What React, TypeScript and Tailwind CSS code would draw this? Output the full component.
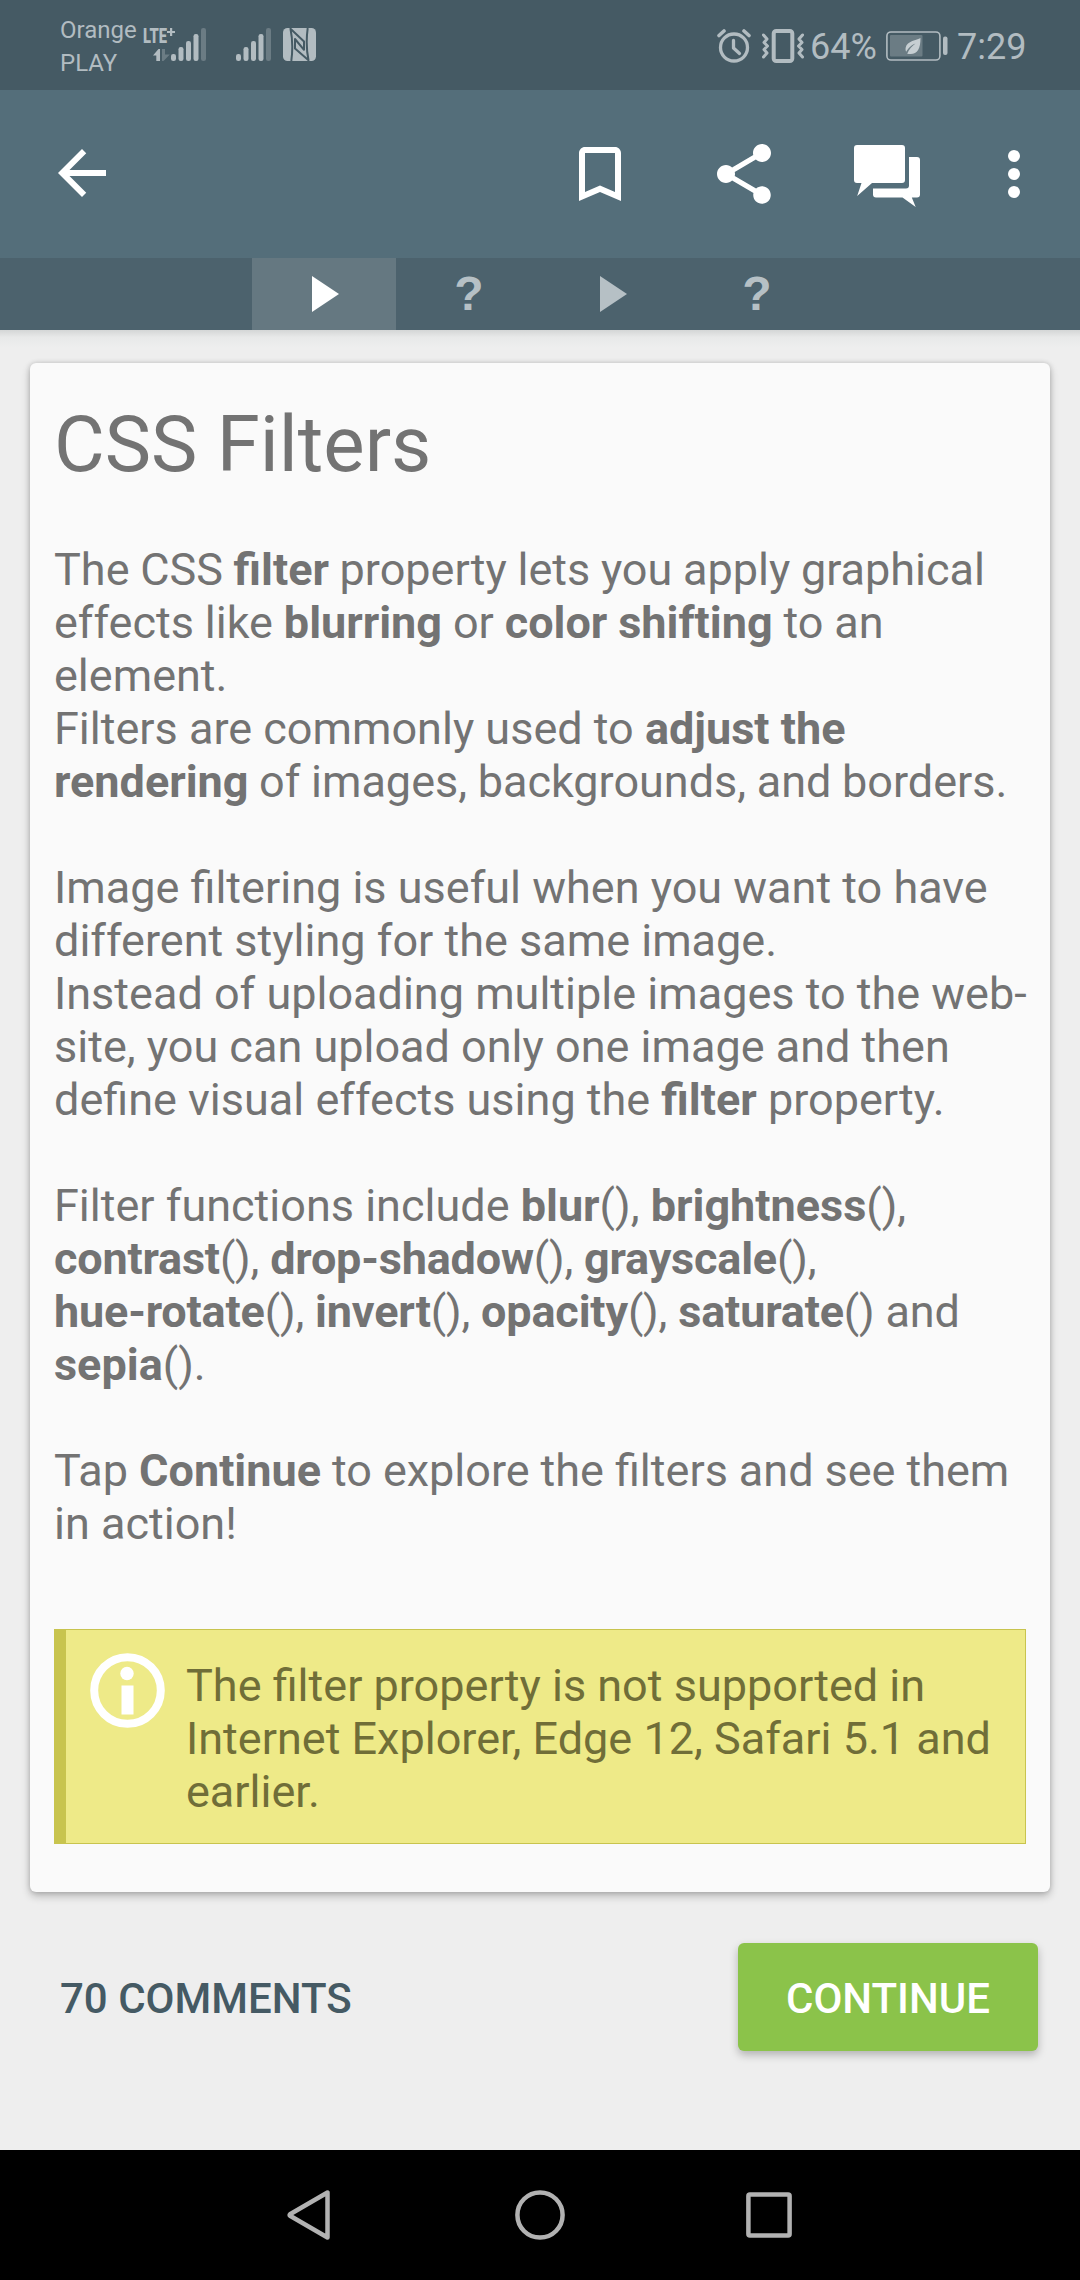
import React from "react";

const SignalBars = () => (
  <svg width="35" height="33" viewBox="0 0 35 33" fill="#b2bcc1" className="shrink-0">
    <rect x="0" y="26" width="5" height="7" rx="2.2" />
    <rect x="7.5" y="19" width="5" height="14" rx="2.2" />
    <rect x="15" y="13" width="5" height="20" rx="2.2" />
    <rect x="22.5" y="6" width="5" height="27" rx="2.2" />
    <rect x="30" y="0" width="5" height="33" rx="2.2" fill="#6b7c84" />
  </svg>
);

const NetworkType = () => (
  <div className="flex h-[33px] w-[28px] shrink-0 flex-col justify-between">
    <div className="flex h-[15px] items-start">
      <span className="w-[24px] origin-left scale-x-[0.7] pt-[1px] text-[21px] leading-[15px] font-black whitespace-nowrap">
        LTE
      </span>
      <svg width="8" height="8" viewBox="0 0 8 8" className="-mr-3 shrink-0" fill="#b2bcc1">
        <path d="M3 0h2.200v2.900H8v2.200H5.200V8H3V5.100H0V2.900h3z" />
      </svg>
    </div>
    <svg width="17" height="12" viewBox="0 0 17 12" className="ml-[10px] shrink-0">
      <path d="M0 6.500 5.500 0H7v12H3.300V6.500z" fill="#b2bcc1" />
      <path d="M9 0h3v5.500h4.800L10.500 12H9z" fill="#6b7c84" />
    </svg>
  </div>
);

const NfcIcon = () => (
  <svg width="33" height="33" viewBox="0 0 33 33" className="shrink-0">
    <rect width="33" height="33" rx="4.500" fill="#b2bcc1" />
    <path
      d="M8.300 33Q10.600 16 7.500 0.800L21 13.500V21.800L12 11V20.500L25.500 32.200Q22.400 17 24.700 0"
      fill="none"
      stroke="#455a64"
      strokeWidth="2"
      strokeLinejoin="round"
    />
  </svg>
);

const AlarmIcon = () => (
  <svg width="34" height="34" viewBox="0 0 34 34" fill="none" stroke="#b2bcc1" className="shrink-0">
    <circle cx="17" cy="18.500" r="13.500" strokeWidth="3.300" />
    <path d="M16.500 11.500v7.500l6 5.500" strokeWidth="3.300" strokeLinecap="round" strokeLinejoin="round" />
    <path d="M2 6.500 7 2M32 6.500 27 2" strokeWidth="3.600" strokeLinecap="round" />
  </svg>
);

const VibrateIcon = () => (
  <svg width="42" height="34" viewBox="0 0 42 34" fill="none" stroke="#b2bcc1" className="shrink-0">
    <rect x="11.700" y="2" width="18.600" height="30" rx="2.500" strokeWidth="4" />
    <path
      d="M1.500 6l3.500 4-3 3.500 3.500 3.500-3.500 3.500 3 3.500-3.500 4M40.500 6l-3.500 4 3 3.500-3.500 3.500 3.500 3.500-3 3.500 3.500 4"
      strokeWidth="3"
      strokeLinecap="round"
      strokeLinejoin="round"
    />
  </svg>
);

const BatteryIcon = () => (
  <svg width="62" height="30" viewBox="0 0 62 30" className="shrink-0">
    <rect x="0.900" y="1" width="53" height="28" rx="4" fill="none" stroke="#b2bcc1" strokeWidth="1.600" />
    <rect x="4" y="4" width="32.500" height="21.500" rx="1" fill="#6b7c84" />
    <rect x="57" y="5.500" width="4.500" height="18.500" rx="2" fill="#b2bcc1" />
    <path
      d="M34.500 7c-3.500 2-13.500 3-14.800 9.500-.4 2 0 3.300.5 4.200 3-5 6.300-7 9.300-8.200-3.300 2.600-6.500 5.500-8.300 10.200 9.300 2 13.300-3.700 13.300-15.700z"
      fill="#c6ced2"
    />
  </svg>
);

const StatusBar = () => (
  <header className="flex h-[90px] items-start bg-[#455a64] text-[#b2bcc1]">
    <div className="ml-[60px] w-[83px] shrink-0 pt-[14px] text-[24px] leading-[33px]">
      <div>Orange</div>
      <div>PLAY</div>
    </div>
    <div className="flex pt-[28px]">
      <NetworkType />
      <SignalBars />
      <div className="ml-[30px] flex gap-[12px]">
        <SignalBars />
        <NfcIcon />
      </div>
    </div>
    <div className="ml-auto flex items-center pt-[28px] pr-[53px]">
      <AlarmIcon />
      <div className="ml-[11px] flex">
        <VibrateIcon />
      </div>
      <span className="ml-[6px] w-[76px] pt-[2px] text-[36px] leading-[34px]">64%</span>
      <BatteryIcon />
      <span className="ml-[9px] w-[70px] pt-[2px] text-[36px] leading-[34px]">7:29</span>
    </div>
  </header>
);

const AppBar = () => (
  <nav className="flex h-[168px] items-center bg-[#546e7a] text-white">
    <svg viewBox="0 0 24 24" fill="currentColor" className="mb-[2px] ml-[46px] size-[72px]">
      <path d="M20 11H7.830l5.590-5.590L12 4l-8 8 8 8 1.410-1.410L7.830 13H20v-2z" />
    </svg>
    <div className="ml-auto flex items-center">
      <svg viewBox="0 0 24 24" fill="currentColor" className="size-[72px]">
        <path d="M17 3H7c-1.100 0-2 .9-2 2v16l7-3 7 3V5c0-1.100-.9-2-2-2zm0 15-5-2.180L7 18V5h10v13z" />
      </svg>
      <svg viewBox="0 0 24 24" fill="currentColor" className="ml-[72px] size-[72px]">
        <path d="M18 16.080c-.76 0-1.440.3-1.960.77L8.910 12.700c.05-.23.09-.46.09-.7s-.04-.47-.09-.7l7.050-4.110c.54.5 1.250.81 2.040.81 1.660 0 3-1.340 3-3s-1.340-3-3-3-3 1.340-3 3c0 .24.04.47.09.7L8.040 9.810C7.500 9.310 6.790 9 6 9c-1.660 0-3 1.340-3 3s1.340 3 3 3c.79 0 1.500-.31 2.040-.81l7.120 4.160c-.05.21-.08.43-.08.65 0 1.610 1.310 2.920 2.920 2.920s2.920-1.310 2.920-2.920-1.310-2.920-2.920-2.920z" />
      </svg>
      <svg width="66" height="62" viewBox="0 0 66 62" fill="currentColor" className="mt-[3px] ml-[74px]">
        <path d="M3 0h45a3 3 0 0 1 3 3v32a3 3 0 0 1-3 3H18L3.200 51 7.500 38H3a3 3 0 0 1-3-3V3a3 3 0 0 1 3-3z" />
        <path d="M55 12h8a3 3 0 0 1 3 3v34.500a3 3 0 0 1-3 3h-5.200L61.700 62 48.500 52.500H22a3 3 0 0 1-3-3V43.500h33a3 3 0 0 0 3-3z" />
      </svg>
      <svg viewBox="0 0 24 24" fill="currentColor" className="mr-[30px] ml-[58px] size-[72px]">
        <circle cx="12" cy="6" r="2" />
        <circle cx="12" cy="12" r="2" />
        <circle cx="12" cy="18" r="2" />
      </svg>
    </div>
  </nav>
);

const Play = () => (
  <svg width="27" height="36" viewBox="0 0 27 36" fill="currentColor" className="ml-[3px]">
    <path d="M0 0 27 18 0 36z" />
  </svg>
);

const Question = () => (
  <span className="ml-[2px] font-['Liberation_Sans',sans-serif] text-[48px] leading-[72px] font-bold">?</span>
);

const LessonTabs = () => (
  <div className="flex h-[72px] justify-center bg-[#4c626d] text-[#b6c0c5]">
    <div className="flex w-[144px] items-center justify-center bg-[#657881] text-white">
      <Play />
    </div>
    <div className="flex w-[144px] items-center justify-center">
      <Question />
    </div>
    <div className="flex w-[144px] items-center justify-center">
      <Play />
    </div>
    <div className="flex w-[144px] items-center justify-center">
      <Question />
    </div>
  </div>
);

const Note = () => (
  <aside className="mt-[79px] flex h-[215px] border border-l-[12px] border-[#c8c44e] bg-[#eeea88] text-[#706e38]">
    <svg width="75" height="75" viewBox="0 0 75 75" className="mt-[23px] ml-[24px] shrink-0">
      <circle cx="37.500" cy="37.500" r="33.300" fill="none" stroke="#fff" strokeWidth="8" />
      <circle cx="37" cy="20.500" r="6.700" fill="#fff" />
      <rect x="31.500" y="32.500" width="12" height="29" fill="#fff" />
    </svg>
    <p className="mt-[29px] ml-[21px] whitespace-nowrap">
      The filter property is not supported in
      <br />
      Internet Explorer, Edge 12, Safari 5.1 and
      <br />
      earlier.
    </p>
  </aside>
);

const LessonCard = () => (
  <main className="mx-[30px] mt-[15px] h-[1529px] rounded-[6px] bg-[#fafafa] px-[24px] text-[45px] leading-[53px] text-[#737373] shadow-[0_4px_8px_rgba(0,0,0,0.24),0_0_5px_rgba(0,0,0,0.16)]">
    <h1 className="pt-[35px] text-[78px] leading-[93px]">CSS Filters</h1>
    <div className="mt-[52px] flex flex-col gap-[53px] whitespace-nowrap">
      <p>
        <span className="[word-spacing:-0.5px]">
          The CSS <b>filter</b> property lets you apply graphical
        </span>
        <br />
        <span className="[word-spacing:-0.3px]">
          effects like <b>blurring</b> or <b>color shifting</b> to an
        </span>
        <br />
        element.
        <br />
        Filters are commonly used to <b>adjust the</b>
        <br />
        <span className="[word-spacing:-0.6px]">
          <b>rendering</b> of images, backgrounds, and borders.
        </span>
      </p>
      <p>
        Image filtering is useful when you want to have
        <br />
        different styling for the same image.
        <br />
        Instead of uploading multiple images to the web-
        <br />
        site, you can upload only one image and then
        <br />
        define visual effects using the <b>filter</b> property.
      </p>
      <p>
        Filter functions include <b>blur</b>(), <b>brightness</b>(),
        <br />
        <span className="tracking-[-0.2px]">
          <b>contrast</b>(), <b>drop-shadow</b>(), <b>grayscale</b>(),
        </span>
        <br />
        <span className="tracking-[-0.18px]">
          <b>hue-rotate</b>(), <b>invert</b>(), <b>opacity</b>(), <b>saturate</b>() and
        </span>
        <br />
        <b>sepia</b>().
      </p>
      <p>
        <span className="[word-spacing:-0.2px]">
          Tap <b>Continue</b> to explore the filters and see them
        </span>
        <br />
        in action!
      </p>
    </div>
    <Note />
  </main>
);

const Actions = () => (
  <div className="mt-[51px] flex h-[108px] items-center justify-between pr-[42px] pl-[60px] text-[42px] font-medium">
    <button className="pt-[2px] text-[#455a64]">70 COMMENTS</button>
    <button className="h-[108px] w-[300px] rounded-[6px] bg-[#8bc34a] pt-[2px] text-white shadow-[0_4px_8px_rgba(0,0,0,0.25)]">
      CONTINUE
    </button>
  </div>
);

const NavigationBar = () => (
  <footer className="mt-auto flex h-[130px] items-center bg-black pl-[287px]">
    <svg
      width="43"
      height="50"
      viewBox="0 0 43 50"
      fill="none"
      stroke="#b2b2b2"
      strokeWidth="4.500"
      strokeLinejoin="round"
    >
      <path d="M40.500 2.500v45L3 25.800a1 1 0 0 1 0-1.600z" />
    </svg>
    <svg width="50" height="50" viewBox="0 0 50 50" fill="none" stroke="#b2b2b2" strokeWidth="4.500" className="ml-[185px]">
      <circle cx="25" cy="25" r="22.600" />
    </svg>
    <svg width="46" height="46" viewBox="0 0 46 46" fill="none" stroke="#b2b2b2" strokeWidth="4.500" className="ml-[181px]">
      <rect x="2.400" y="2.400" width="41.200" height="41.200" rx="1.500" />
    </svg>
  </footer>
);

export default function App() {
  return (
    <div className="flex h-[2280px] w-[1080px] flex-col overflow-hidden bg-[#eeeeee] font-[Roboto,sans-serif]">
      <StatusBar />
      <AppBar />
      <LessonTabs />
      <div className="h-[18px] shrink-0 bg-linear-to-b from-[#d4d6d6] via-[#e8e9e9] via-40% to-[#eeeeee]" />
      <LessonCard />
      <Actions />
      <NavigationBar />
    </div>
  );
}
